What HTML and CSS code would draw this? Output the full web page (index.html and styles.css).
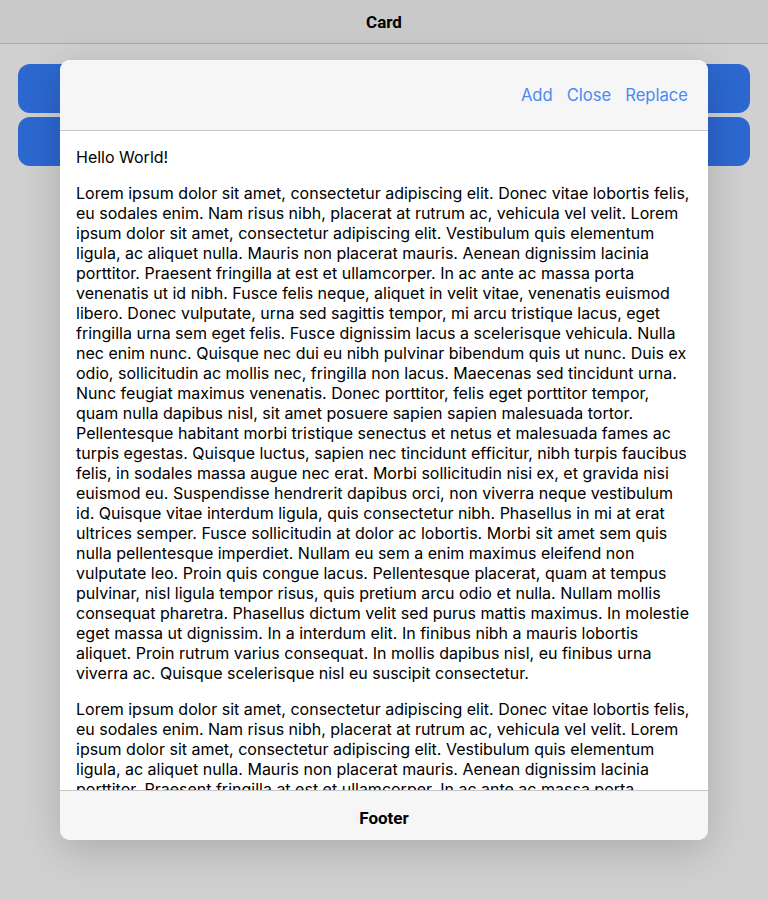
FILE: index.html
```html
<!DOCTYPE html>
<html>
<head>
<meta charset="utf-8">
<link rel="stylesheet" href="styles.css">
</head>
<body>
<div class="page">
  <header class="toolbar"><h1 class="toolbar-title">Card</h1></header>
  <main class="page-content">
    <div class="block-btn"></div>
    <div class="block-btn"></div>
  </main>
</div>
<div class="modal">
  <div class="modal-header">
    <button class="hbtn">Add</button>
    <button class="hbtn">Close</button>
    <button class="hbtn">Replace</button>
  </div>
  <div class="modal-body">
    <div class="hello">Hello World!</div>
    <p>Lorem ipsum dolor sit amet, consectetur adipiscing elit. Donec vitae lobortis felis, eu sodales enim. Nam risus nibh, placerat at rutrum ac, vehicula vel velit. Lorem ipsum dolor sit amet, consectetur adipiscing elit. Vestibulum quis elementum ligula, ac aliquet nulla. Mauris non placerat mauris. Aenean dignissim lacinia porttitor. Praesent fringilla at est et ullamcorper. In ac ante ac massa porta venenatis ut id nibh. Fusce felis neque, aliquet in velit vitae, venenatis euismod libero. Donec vulputate, urna sed sagittis tempor, mi arcu tristique lacus, eget fringilla urna sem eget felis. Fusce dignissim lacus a scelerisque vehicula. Nulla nec enim nunc. Quisque nec dui eu nibh pulvinar bibendum quis ut nunc. Duis ex odio, sollicitudin ac mollis nec, fringilla non lacus. Maecenas sed tincidunt urna. Nunc feugiat maximus venenatis. Donec porttitor, felis eget porttitor tempor, quam nulla dapibus nisl, sit amet posuere sapien sapien malesuada tortor. Pellentesque habitant morbi tristique senectus et netus et malesuada fames ac turpis egestas. Quisque luctus, sapien nec tincidunt efficitur, nibh turpis faucibus felis, in sodales massa augue nec erat. Morbi sollicitudin nisi ex, et gravida nisi euismod eu. Suspendisse hendrerit dapibus orci, non viverra neque vestibulum id. Quisque vitae interdum ligula, quis consectetur nibh. Phasellus in mi at erat ultrices semper. Fusce sollicitudin at dolor ac lobortis. Morbi sit amet sem quis nulla pellentesque imperdiet. Nullam eu sem a enim maximus eleifend non vulputate leo. Proin quis congue lacus. Pellentesque placerat, quam at tempus pulvinar, nisl ligula tempor risus, quis pretium arcu odio et nulla. Nullam mollis consequat pharetra. Phasellus dictum velit sed purus mattis maximus. In molestie eget massa ut dignissim. In a interdum elit. In finibus nibh a mauris lobortis aliquet. Proin rutrum varius consequat. In mollis dapibus nisl, eu finibus urna viverra ac. Quisque scelerisque nisl eu suscipit consectetur.</p>
    <p>Lorem ipsum dolor sit amet, consectetur adipiscing elit. Donec vitae lobortis felis, eu sodales enim. Nam risus nibh, placerat at rutrum ac, vehicula vel velit. Lorem ipsum dolor sit amet, consectetur adipiscing elit. Vestibulum quis elementum ligula, ac aliquet nulla. Mauris non placerat mauris. Aenean dignissim lacinia porttitor. Praesent fringilla at est et ullamcorper. In ac ante ac massa porta venenatis ut id nibh. Fusce felis neque, aliquet in velit vitae, venenatis euismod libero.</p>
  </div>
  <div class="modal-footer"><span class="footer-title">Footer</span></div>
</div>
</body>
</html>
```

FILE: styles.css
```css
* { box-sizing: border-box; }
html, body { margin: 0; padding: 0; }
body {
  width: 768px;
  height: 900px;
  overflow: hidden;
  background: #d0d0d0;
  font-family: Inter, Roboto, "Liberation Sans", sans-serif;
  color: #000;
}
.page { display: flex; flex-direction: column; height: 900px; }
.toolbar {
  height: 44px;
  background: #c9c9c9;
  border-bottom: 1px solid #a8a8a8;
  display: flex;
  align-items: center;
  justify-content: center;
}
.toolbar-title { margin: 0; font-size: 17px; font-weight: 700; font-family: Roboto, sans-serif; }
.page-content {
  padding: 20px 18px 0;
  display: flex;
  flex-direction: column;
  gap: 4px;
}
.block-btn {
  height: 49px;
  background: #2c68d0;
  border-radius: 12px;
}
.modal {
  position: absolute;
  left: 60px;
  top: 60px;
  width: 648px;
  height: 780px;
  border-radius: 10px;
  overflow: hidden;
  display: flex;
  flex-direction: column;
  background: #fff;
  box-shadow: 0 10px 40px rgba(0,0,0,0.18);
}
.modal-header {
  height: 71px;
  flex: none;
  background: #f6f6f6;
  border-bottom: 1px solid #c8c8c8;
  display: flex;
  align-items: center;
  justify-content: flex-end;
  padding: 0 20px 0 0;
  gap: 14px;
}
.hbtn {
  border: 0;
  background: none;
  padding: 0;
  font-family: Inter, Roboto, sans-serif;
  font-size: 16.6px;
  color: #4a8af5;
}
.modal-body {
  flex: 1;
  overflow: hidden;
  padding: 16px 16px 0;
  font-size: 16px;
  line-height: 20px;
}
.hello { margin: 0; }
.modal-body p { margin: 16px 0 0; }
.modal-footer {
  height: 50px;
  flex: none;
  background: #f6f6f6;
  border-top: 1px solid #c8c8c8;
  display: flex;
  align-items: center;
  justify-content: center;
  padding-top: 4px;
}
.footer-title { font-size: 17px; font-weight: 700; font-family: Roboto, sans-serif; }
```
